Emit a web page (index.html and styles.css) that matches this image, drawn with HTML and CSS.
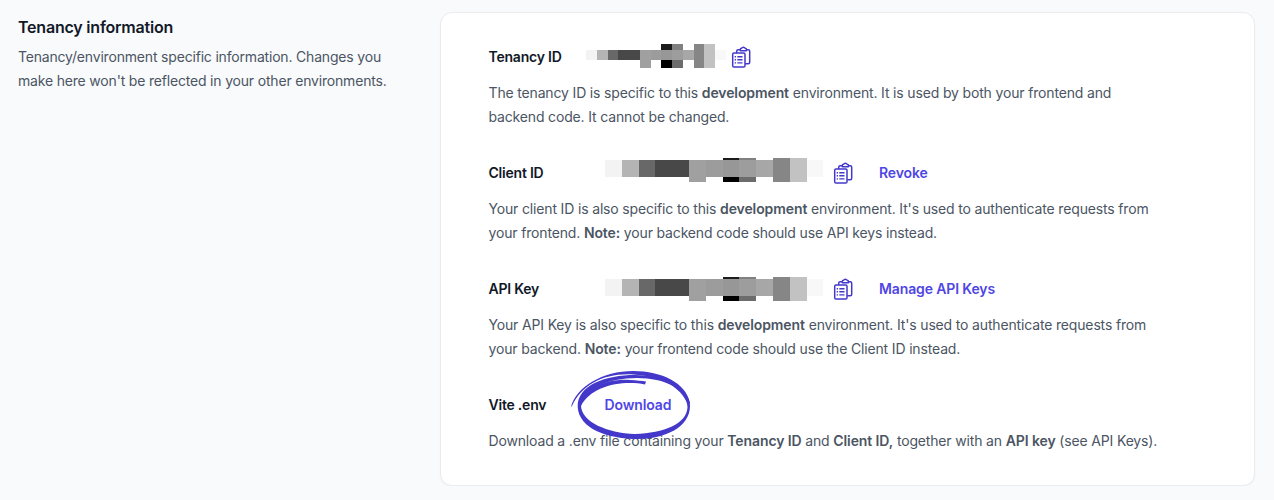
FILE: index.html
```html
<!DOCTYPE html>
<html lang="en">
<head>
<meta charset="utf-8">
<title>Tenancy information</title>
<link rel="stylesheet" href="styles.css">
</head>
<body>
<svg class="defs" width="0" height="0" aria-hidden="true">
  <symbol id="copy" viewBox="0 0 20 24">
    <g fill="none" stroke="#4338ca" stroke-width="1.5" stroke-linejoin="round" stroke-linecap="round">
      <path d="M5.700 7.500V6.200a1.500 1.500 0 0 1 1.500-1.500h1.500M16 4.700h1.200a1.500 1.500 0 0 1 1.500 1.500v11a1.500 1.500 0 0 1-1.500 1.500h-2.400"/>
      <path d="M9.300 5.700V4.300q0-.9 1.300-1a1.900 1.900 0 0 1 3.500 0q1.300.1 1.300 1v1.400z"/>
      <rect x="1.700" y="8" width="12.300" height="14" rx="1.300"/>
      <path stroke-width="1.400" stroke-linecap="butt" d="M3.700 11.700h1.300M6.300 11.700h5.200M3.700 14.800h1.300M6.300 14.800h5.200M3.700 17.900h1.300M6.300 17.900h5.200"/>
    </g>
  </symbol>
</svg>
<main class="page">
  <section class="intro">
    <h2 class="title">Tenancy information</h2>
    <p class="text">Tenancy/environment specific information. Changes you make here won't be reflected in your other environments.</p>
  </section>
  <section class="card">
    <div class="field">
      <div class="row row-tenancy">
        <span class="label">Tenancy ID</span>
        <svg class="value"></svg>
        <svg class="icon"><use href="#copy"/></svg>
      </div>
      <p class="text">The tenancy ID is specific to this <b>development</b> environment. It is used by both your frontend and backend code. It cannot be changed.</p>
    </div>
    <div class="field">
      <div class="row">
        <span class="label">Client ID</span>
        <svg class="value"></svg>
        <svg class="icon"><use href="#copy"/></svg>
        <a class="link">Revoke</a>
      </div>
      <p class="text">Your client ID is also specific to this <b>development</b> environment. It's used to authenticate requests from your frontend. <b>Note:</b> your backend code should use API keys instead.</p>
    </div>
    <div class="field">
      <div class="row">
        <span class="label">API Key</span>
        <svg class="value"></svg>
        <svg class="icon"><use href="#copy"/></svg>
        <a class="link">Manage API Keys</a>
      </div>
      <p class="text">Your API Key is also specific to this <b>development</b> environment. It's used to authenticate requests from your backend. <b>Note:</b> your frontend code should use the Client ID instead.</p>
    </div>
    <div class="field">
      <div class="row">
        <span class="label">Vite .env</span>
        <a class="download">Download
          <svg class="scribble" viewBox="0 0 150 95">
            <path d="M11 47C16 27 43 11 73 11C102 11 126 23 130 43L128.500 46C121 26 101 16 73 14.500C43 13 22 25 12 46Z"/>
            <path fill-rule="evenodd" d="M17.700 47C17 25 46 15 75 15C104 15 130 27 130 46C130 67 105 79 78 79C48 79 19 69 17.700 47ZM21 46C22 62 47 73 75 74C104 73 127 64 127.500 47C127 29 105 18 77 18C48 18 22 29 21 46Z"/>
            <path d="M20 43C24 27 49 18.500 70 20Q80 20.500 86 21.500L85 24.500C62 20 31 26 21 46Z"/>
          </svg>
        </a>
      </div>
      <p class="text">Download a .env file containing your <b>Tenancy ID</b> and <b>Client ID,</b> together with an <b>API key</b> (see API Keys).</p>
    </div>
  </section>
</main>
<script src="mask.js"></script>
</body>
</html>
```

FILE: mask.js
```js
// Fill each value slot with the pixelated mask that hides the identifier.
const cells = ["#f3f3f3", "#b4b4b4", "#686868", "#484848", "#484848", "#a0a0a0", "#9c9c9c", "#979797", "#9d9d9d", "#a7a7a7", "#868686", "#c2c2c2", "#f8f8f8"];
const above = { 7: "#1c1c1c", 8: "#808080", 10: "#868686", 11: "#c2c2c2" };
const below = { 5: "#a0a0a0", 7: "#000000", 8: "#6c6c6c", 10: "#868686", 11: "#c2c2c2" };

document.querySelectorAll(".value").forEach((svg, index) => {
  const top = index === 0 ? 5.5 : 2;
  const bottom = index === 0 ? 16.2 : 19;
  svg.setAttribute("viewBox", "0 0 13 24");
  svg.setAttribute("preserveAspectRatio", "none");
  const rect = (x, y, height, fill) =>
    `<rect x="${x}" y="${y}" width="1" height="${height}" fill="${fill}"/>`;
  let shapes = "";
  cells.forEach((fill, x) => { shapes += rect(x, top, bottom - top, fill); });
  for (const x in above) shapes += rect(x, 0, top, above[x]);
  for (const x in below) shapes += rect(x, bottom, 24 - bottom, below[x]);
  svg.innerHTML = shapes;
});
```

FILE: styles.css
```css
body {
  margin: 0;
  background: #f9fafc;
  color: #4b5563;
  font: 14px/24px Inter, "Liberation Sans", sans-serif;
  letter-spacing: -0.16px;
}
.defs { display: none; }
.page {
  display: grid;
  grid-template-columns: 380px 815px;
  column-gap: 42px;
  padding: 12px 0 0 18px;
  align-items: start;
}
.title {
  margin: 3px 0 6px;
  color: #111827;
  font-size: 16px;
  line-height: 24px;
  font-weight: 600;
  letter-spacing: -0.21px;
}
.text { margin: 0; }
.intro .text { letter-spacing: -0.185px; }
.card .text { max-width: 672px; }
b { font-weight: 600; letter-spacing: -0.1px; }
.card {
  box-sizing: border-box;
  height: 474px;
  padding: 32px 48px;
  margin-left: -0.5px;
  display: flex;
  flex-direction: column;
  gap: 32px;
  background: #fff;
  border: 1px solid #e9ebef;
  border-radius: 12px;
  box-shadow: 0 1px 2px #0000000a;
}
.field {
  display: flex;
  flex-direction: column;
  gap: 12px;
}
.row {
  display: flex;
  height: 24px;
}
.label {
  flex: none;
  width: 116px;
  color: #111827;
  font-weight: 600;
  letter-spacing: -0.22px;
}
.row-tenancy .label { width: 97px; }
.value {
  width: 218.5px;
  height: 24px;
  margin-top: -3px;
  shape-rendering: crispEdges;
}
.field:nth-child(3) .value { margin-top: 0; }
.row-tenancy .value {
  width: 140px;
  margin-top: -1px;
}
.icon {
  width: 20px;
  height: 24px;
  margin-left: 10px;
}
.row-tenancy .icon { margin-left: 5px; }
.link, .download {
  color: #4f46e5;
  font-weight: 600;
  letter-spacing: -0.13px;
}
.link { margin-left: 26px; }
.download { position: relative; }
.scribble {
  position: absolute;
  left: -44.5px;
  top: -33px;
  width: 150px;
  height: 95px;
  fill: #4338ca;
  pointer-events: none;
}
```
